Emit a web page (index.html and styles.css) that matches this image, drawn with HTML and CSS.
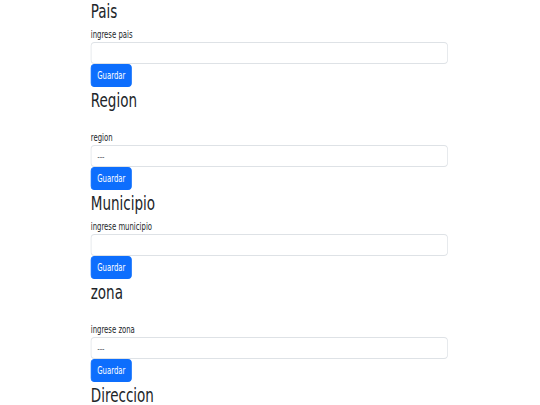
FILE: index.html
```html
<!DOCTYPE html>
<html lang="es">
<head>
<meta charset="utf-8">
<title>Ubicaciones</title>
<link rel="stylesheet" href="styles.css">
</head>
<body>
<div class="page">
  <form class="section">
    <h2 class="title">Pais</h2>
    <label class="label">ingrese pais</label>
    <input class="field" type="text">
    <button class="btn" type="button">Guardar</button>
  </form>
  <form class="section">
    <h2 class="title">Region</h2>
    <div class="spacer"></div>
    <label class="label">region</label>
    <select class="field"><option>---</option></select>
    <button class="btn" type="button">Guardar</button>
  </form>
  <form class="section">
    <h2 class="title">Municipio</h2>
    <label class="label">ingrese municipio</label>
    <input class="field" type="text">
    <button class="btn" type="button">Guardar</button>
  </form>
  <form class="section">
    <h2 class="title">zona</h2>
    <div class="spacer"></div>
    <label class="label">ingrese zona</label>
    <select class="field"><option>---</option></select>
    <button class="btn" type="button">Guardar</button>
  </form>
  <form class="section">
    <h2 class="title">Direccion</h2>
  </form>
</div>
</body>
</html>
```
FILE: styles.css
```css
html, body {
  margin: 0;
  padding: 0;
  background: #fff;
  overflow: hidden;
}

.page {
  width: 622px;
  box-sizing: border-box;
  padding-left: 126px;
  transform: scaleX(0.72);
  transform-origin: 0 0;
  font-family: "DejaVu Sans", sans-serif;
  color: #212529;
}

.section {
  display: flex;
  flex-direction: column;
  align-items: flex-start;
  width: 496px;
  margin: 0;
  padding-bottom: 2px;
}

.title {
  font-size: 18.8px;
  line-height: 24px;
  font-weight: 400;
  margin: 0 0 2px;
}

.spacer {
  height: 14px;
}

.label {
  font-size: 9.6px;
  line-height: 13px;
  margin: 2px 0 1px;
}

.field {
  width: 100%;
  height: 22px;
  box-sizing: border-box;
  margin: 0;
  padding: 0 8px;
  border: 1px solid #dee2e6;
  border-radius: 5.5px / 4px;
  background: #fff;
  color: #495057;
  font: 9.4px "DejaVu Sans", sans-serif;
  -webkit-appearance: none;
  appearance: none;
}

.btn {
  height: 23px;
  box-sizing: border-box;
  margin: 0;
  padding: 0 8px;
  border: 1px solid #0d6efd;
  border-radius: 5.5px / 4px;
  background: #0d6efd;
  color: #fff;
  font: 9.6px/1 "DejaVu Sans", sans-serif;
}
```
